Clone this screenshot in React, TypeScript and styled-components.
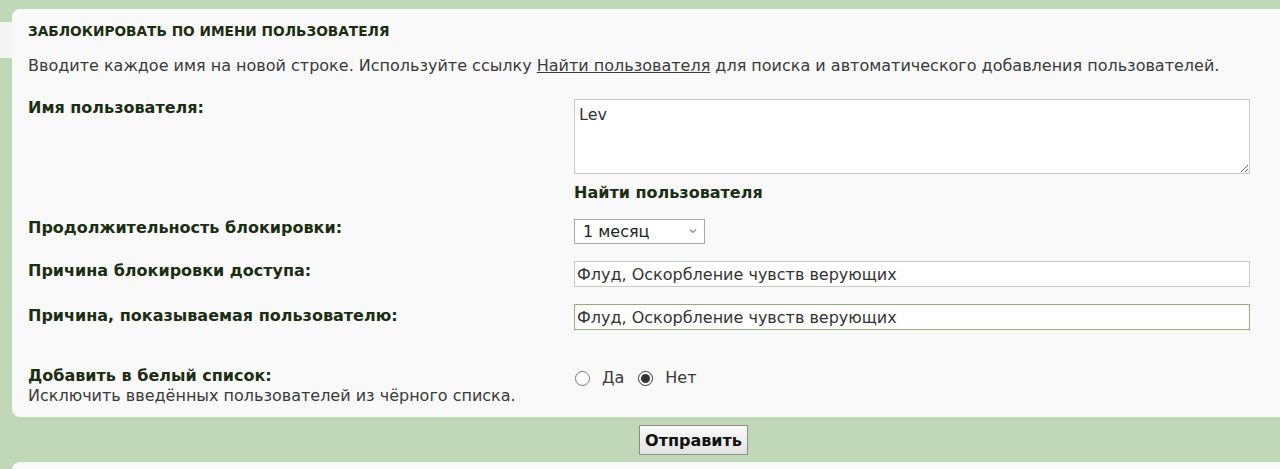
import * as React from "react";
import styled, { createGlobalStyle } from "styled-components";

const GlobalStyle = createGlobalStyle`
  html, body {
    margin: 0;
    padding: 0;
    background: #c0d7b8;
    overflow: hidden;
  }
  body {
    font-family: "DejaVu Sans", Verdana, sans-serif;
    color: #333;
  }
`;

const Page = styled.div`
  width: 1387px;
  padding-top: 9px;
`;

const Panel = styled.fieldset`
  position: relative;
  margin: 0 12px;
  padding: 12px 16px 11px;
  border: none;
  border-radius: 8px;
  background: #f9f9f9;
  min-width: 0;

  &::before {
    content: "";
    position: absolute;
    left: -12px;
    top: 13px;
    width: 12px;
    height: 36px;
    background: #f5f5f5;
  }
`;

const Heading = styled.h3`
  margin: 1px 0 15px;
  font-size: 13.7px;
  line-height: 18px;
  font-weight: bold;
  color: #1b2d12;
  text-transform: uppercase;
`;

const Intro = styled.p`
  margin: 0 0 20px;
  font-size: 16px;
  line-height: 22px;
  color: #3a3a3a;

  a {
    color: #3a3a3a;
    text-decoration: underline;
  }
`;

const Row = styled.div<{ $gap: number }>`
  display: grid;
  grid-template-columns: 546px 676px;
  align-items: start;
  margin-bottom: ${(p) => p.$gap}px;
`;

const Label = styled.div<{ $offset?: number; $tight?: boolean }>`
  padding-top: ${(p) => p.$offset ?? 0}px;
  font-size: 16px;
  font-weight: bold;
  line-height: ${(p) => (p.$tight ? 20 : 22)}px;
  color: #1b2d12;
`;

const Hint = styled.span`
  display: block;
  font-weight: normal;
  color: #3a3a3a;
`;

const Field = styled.div<{ $offset?: number }>`
  display: flex;
  flex-direction: column;
  align-items: flex-start;
  padding-top: ${(p) => p.$offset ?? 0}px;
`;

const TextArea = styled.textarea`
  box-sizing: border-box;
  display: block;
  width: 676px;
  height: 75px;
  padding: 5px 4px;
  border: 1px solid #c8c8c8;
  background: #fff;
  font-family: "DejaVu Sans", sans-serif;
  font-size: 16px;
  color: #333;
  outline: none;
`;

const FindLink = styled.a`
  margin-top: 8px;
  font-size: 16px;
  line-height: 22px;
  font-weight: bold;
  color: #1b2d12;
  text-decoration: none;
`;

const SelectWrap = styled.div`
  position: relative;
  width: 131px;
  height: 25px;

  svg {
    position: absolute;
    right: 8px;
    top: 9px;
    pointer-events: none;
  }
`;

const Select = styled.select`
  appearance: none;
  box-sizing: border-box;
  width: 100%;
  height: 100%;
  padding: 0 20px 0 8px;
  border: 1px solid #a8a8a8;
  border-radius: 0;
  background: #fff;
  font-family: "DejaVu Sans", sans-serif;
  font-size: 16px;
  color: #222;
  outline: none;
`;

const TextInput = styled.input<{ $focused?: boolean }>`
  box-sizing: border-box;
  display: block;
  width: 676px;
  height: 26px;
  padding: 0 2px;
  border: 1px solid ${(p) => (p.$focused ? "#8fae78" : "#c8c8c8")};
  background: #fff;
  font-family: "DejaVu Sans", sans-serif;
  font-size: 16px;
  color: #333;
  outline: none;
`;

const Radios = styled.div`
  display: flex;
  align-items: center;
  gap: 14px;
  padding: 2px 0 0 1px;
  font-size: 16px;
  line-height: 20px;
  color: #3a3a3a;

  label {
    display: flex;
    align-items: center;
    gap: 12px;
  }

  input {
    margin: 0;
    width: 15px;
    height: 15px;
    accent-color: #333;
  }
`;

const Actions = styled.div`
  display: flex;
  justify-content: center;
  padding: 8px 0 7px;
`;

const Submit = styled.button`
  height: 30px;
  padding: 0 5px;
  border: 1px solid #8c8c8c;
  background: linear-gradient(#fbfbfb, #e2e2e2);
  font-family: "DejaVu Sans", sans-serif;
  font-size: 16px;
  font-weight: bold;
  color: #111;
`;

const NextPanel = styled.div`
  height: 30px;
  margin: 0 12px;
  border-radius: 8px 8px 0 0;
  background: #f9f9f9;
`;

const Chevron = () => (
  <svg width="8" height="6" viewBox="0 0 8 6" fill="none">
    <path d="M1 1.5 4 4.5 7 1.5" stroke="#888" strokeWidth="1.1" />
  </svg>
);

export default function App() {
  return (
    <>
      <GlobalStyle />
      <Page>
        <Panel>
          <Heading>Заблокировать по имени пользователя</Heading>
          <Intro>
            Вводите каждое имя на новой строке. Используйте ссылку{" "}
            <a href="#">Найти пользователя</a> для поиска и автоматического
            добавления пользователей.
          </Intro>
          <Row $gap={13}>
            <Label>Имя пользователя:</Label>
            <Field $offset={2}>
              <TextArea defaultValue="Lev" />
              <FindLink href="#">Найти пользователя</FindLink>
            </Field>
          </Row>
          <Row $gap={16}>
            <Label>Продолжительность блокировки:</Label>
            <Field $offset={2}>
              <SelectWrap>
                <Select defaultValue="month">
                  <option value="month">1 месяц</option>
                </Select>
                <Chevron />
              </SelectWrap>
            </Field>
          </Row>
          <Row $gap={17}>
            <Label>Причина блокировки доступа:</Label>
            <Field $offset={1}>
              <TextInput defaultValue="Флуд, Оскорбление чувств верующих" />
            </Field>
          </Row>
          <Row $gap={36}>
            <Label $offset={1}>Причина, показываемая пользователю:</Label>
            <Field>
              <TextInput $focused defaultValue="Флуд, Оскорбление чувств верующих" />
            </Field>
          </Row>
          <Row $gap={0}>
            <Label $tight>
              Добавить в белый список:
              <Hint>Исключить введённых пользователей из чёрного списка.</Hint>
            </Label>
            <Radios>
              <label>
                <input type="radio" name="whitelist" /> Да
              </label>
              <label>
                <input type="radio" name="whitelist" defaultChecked /> Нет
              </label>
            </Radios>
          </Row>
        </Panel>
        <Actions>
          <Submit type="button">Отправить</Submit>
        </Actions>
        <NextPanel />
      </Page>
    </>
  );
}
